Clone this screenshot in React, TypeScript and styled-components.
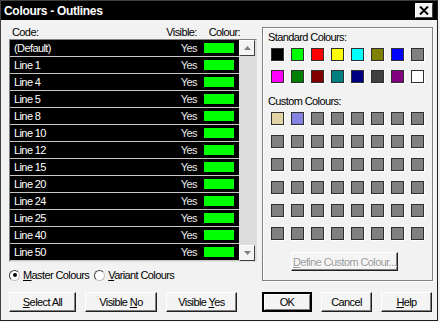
import styled, { createGlobalStyle } from 'styled-components'

const uiFont = `'Liberation Sans', Arial, sans-serif`

const GlobalStyle = createGlobalStyle`
  html, body {
    margin: 0;
    padding: 0;
    background: #f2f2f2;
  }
  body {
    font-family: ${uiFont};
    font-size: 11px;
    letter-spacing: -0.6px;
    color: #000;
  }
`

const lines = ['(Default)', 'Line 1', 'Line 4', 'Line 5', 'Line 8', 'Line 10', 'Line 12', 'Line 15', 'Line 20', 'Line 24', 'Line 25', 'Line 40', 'Line 50']

const standard = [
  '#000000', '#00ff00', '#ff0000', '#ffff00', '#00ffff', '#808000', '#0000ff', '#808080',
  '#ff00ff', '#008000', '#800000', '#008080', '#000080', '#404040', '#800080', '#ffffff',
]

const custom = ['#e2d3a6', '#8484e0', ...Array(46).fill('#808080')]

export default function App() {
  return (
    <>
      <GlobalStyle />
      <Window>
        <TitleBar>
          <Title>Colours - Outlines</Title>
          <CloseButton>
            <svg width="10" height="9" viewBox="0 0 10 9">
              <path d="M1 0.5 L9 8.5 M9 0.5 L1 8.5" stroke="#000" strokeWidth="2" />
            </svg>
          </CloseButton>
        </TitleBar>
        <Body>
          <LeftColumn>
            <HeaderRow>
              <span>Code:</span>
              <VisibleLabel>Visible:</VisibleLabel>
              <ColourLabel>Colour:</ColourLabel>
            </HeaderRow>
            <ListBox>
              <Rows>
                {lines.map((name) => (
                  <Row key={name}>
                    <RowName>{name}</RowName>
                    <RowVisible>Yes</RowVisible>
                    <Swatch />
                  </Row>
                ))}
              </Rows>
              <ScrollBar>
                <ScrollButton>
                  <svg width="7" height="4" viewBox="0 0 7 4">
                    <path d="M3.5 0 L7 4 L0 4 Z" fill="#808080" />
                  </svg>
                </ScrollButton>
                <ScrollButton>
                  <svg width="7" height="4" viewBox="0 0 7 4">
                    <path d="M0 0 L7 0 L3.5 4 Z" fill="#808080" />
                  </svg>
                </ScrollButton>
              </ScrollBar>
            </ListBox>
            <RadioRow>
              <RadioOption>
                <Radio $checked />
                <span><u>M</u>aster Colours</span>
              </RadioOption>
              <RadioOption>
                <Radio />
                <span><u>V</u>ariant Colours</span>
              </RadioOption>
            </RadioRow>
          </LeftColumn>
          <GroupBox>
            <GroupLabel>Standard Colours:</GroupLabel>
            <ColourGrid>
              {standard.map((c, i) => (
                <ColourCell key={i} style={{ background: c }} />
              ))}
            </ColourGrid>
            <GroupLabel $top={13}>Custom Colours:</GroupLabel>
            <ColourGrid $rowGap={10}>
              {custom.map((c, i) => (
                <ColourCell key={i} style={{ background: c }} />
              ))}
            </ColourGrid>
            <DefineButton disabled>
              <u>D</u>efine Custom Colour...
            </DefineButton>
          </GroupBox>
          <ButtonRow>
            <Button $width={67}><u>S</u>elect All</Button>
            <Button $width={72}>Visible <u>N</u>o</Button>
            <Button $width={71}>Visible <u>Y</u>es</Button>
          </ButtonRow>
          <ButtonRow>
            <Button $width={50} $default>OK</Button>
            <Button $width={51}>Cancel</Button>
            <Button $width={51}><u>H</u>elp</Button>
          </ButtonRow>
        </Body>
      </Window>
    </>
  )
}

const Window = styled.div`
  width: 438px;
  height: 321px;
  box-sizing: border-box;
  border: 1px solid #404040;
  border-right-color: #202020;
  border-bottom-color: #202020;
  background: #f2f2f2;
  display: flex;
  flex-direction: column;
`
const TitleBar = styled.div`
  height: 19px;
  background: #000;
  display: flex;
  align-items: center;
  justify-content: space-between;
  padding: 0 4px 0 3px;
`
const Title = styled.div`
  color: #fff;
  font-weight: bold;
  font-size: 12px;
  letter-spacing: -0.3px;
`
const CloseButton = styled.div`
  width: 18px;
  height: 15px;
  box-sizing: border-box;
  background: #f4f4f4;
  border: 1px solid #fff;
  border-right-color: #404040;
  border-bottom-color: #404040;
  display: flex;
  align-items: center;
  justify-content: center;
`
const Body = styled.div`
  display: grid;
  grid-template-columns: 248px 171px;
  column-gap: 5px;
  row-gap: 10px;
  padding: 6px 0 0 8px;
`
const LeftColumn = styled.div`
  display: flex;
  flex-direction: column;
`
const HeaderRow = styled.div`
  height: 13px;
  display: flex;
  align-items: flex-start;
  padding-left: 3px;
  line-height: 13px;
`
const VisibleLabel = styled.span`
  margin-left: auto;
`
const ColourLabel = styled.span`
  margin-left: 12px;
  margin-right: 17px;
`
const ListBox = styled.div`
  height: 223px;
  box-sizing: border-box;
  border: 1px solid #808080;
  border-right-color: #e0e0e0;
  border-bottom-color: #e0e0e0;
  display: flex;
`
const Rows = styled.div`
  flex: 1;
  display: flex;
  flex-direction: column;
  background: #c8c8c8;
`
const Row = styled.div`
  height: 16px;
  margin-bottom: 1px;
  background: #000;
  color: #fff;
  display: flex;
  align-items: center;
  padding: 0 5px 0 4px;
`
const RowName = styled.span`
  flex: 1;
`
const RowVisible = styled.span`
  color: #e8e8e8;
  margin-right: 7px;
`
const Swatch = styled.span`
  width: 30px;
  height: 10px;
  background: #00ff00;
`
const ScrollBar = styled.div`
  width: 17px;
  background: #dcdcdc;
  display: flex;
  flex-direction: column;
  justify-content: space-between;
`
const ScrollButton = styled.div`
  width: 16px;
  height: 16px;
  box-sizing: border-box;
  background: #f4f4f4;
  border: 1px solid #fff;
  border-right-color: #404040;
  border-bottom-color: #404040;
  display: flex;
  align-items: center;
  justify-content: center;
`
const RadioRow = styled.div`
  margin-top: 6px;
  height: 14px;
  display: flex;
  align-items: center;
  gap: 5px;
`
const RadioOption = styled.label`
  display: flex;
  align-items: center;
  gap: 3px;
`
const Radio = styled.span<{ $checked?: boolean }>`
  width: 11px;
  height: 11px;
  box-sizing: border-box;
  border-radius: 50%;
  border: 1px solid #404040;
  border-right-color: #c0c0c0;
  border-bottom-color: #c0c0c0;
  background: #fff;
  display: flex;
  align-items: center;
  justify-content: center;
  &::after {
    content: '';
    width: 4px;
    height: 4px;
    border-radius: 50%;
    background: ${(p) => (p.$checked ? '#000' : 'transparent')};
  }
`
const GroupBox = styled.div`
  margin-top: 1px;
  height: 254px;
  box-sizing: border-box;
  border: 1px solid #808080;
  box-shadow: inset 1px 1px 0 #fff, 1px 1px 0 #fff;
  padding: 4px 0 0 8px;
  display: flex;
  flex-direction: column;
`
const GroupLabel = styled.div<{ $top?: number }>`
  margin-left: -3px;
  margin-top: ${(p) => p.$top ?? 0}px;
  margin-bottom: 5px;
  line-height: 11px;
`
const ColourGrid = styled.div<{ $rowGap?: number }>`
  display: grid;
  grid-template-columns: repeat(8, 13px);
  column-gap: 7px;
  row-gap: ${(p) => p.$rowGap ?? 9}px;
`
const ColourCell = styled.span`
  width: 13px;
  height: 13px;
  box-sizing: border-box;
  border: 1px solid #303030;
  box-shadow: 1px 1px 0 #fff;
`
const BaseButton = styled.button`
  font-family: ${uiFont};
  font-size: 11px;
  letter-spacing: -0.6px;
  background: #f4f4f4;
  box-sizing: border-box;
  border: 1px solid #fff;
  border-right-color: #202020;
  border-bottom-color: #202020;
  box-shadow: inset -1px -1px 0 #808080;
  padding: 0;
  color: #000;
  white-space: nowrap;
`
const DefineButton = styled(BaseButton)`
  align-self: flex-start;
  margin: 12px 0 0 20px;
  width: 107px;
  height: 19px;
  color: #9a9a9a;
  text-shadow: 1px 1px 0 #fff;
`
const ButtonRow = styled.div`
  display: flex;
  gap: 9px;
`
const Button = styled(BaseButton)<{ $width: number; $default?: boolean }>`
  width: ${(p) => p.$width}px;
  height: 20px;
  ${(p) => (p.$default ? 'border-width: 2px; border-color: #000; box-shadow: inset 1px 1px 0 #fff, inset -1px -1px 0 #808080;' : '')}
`
